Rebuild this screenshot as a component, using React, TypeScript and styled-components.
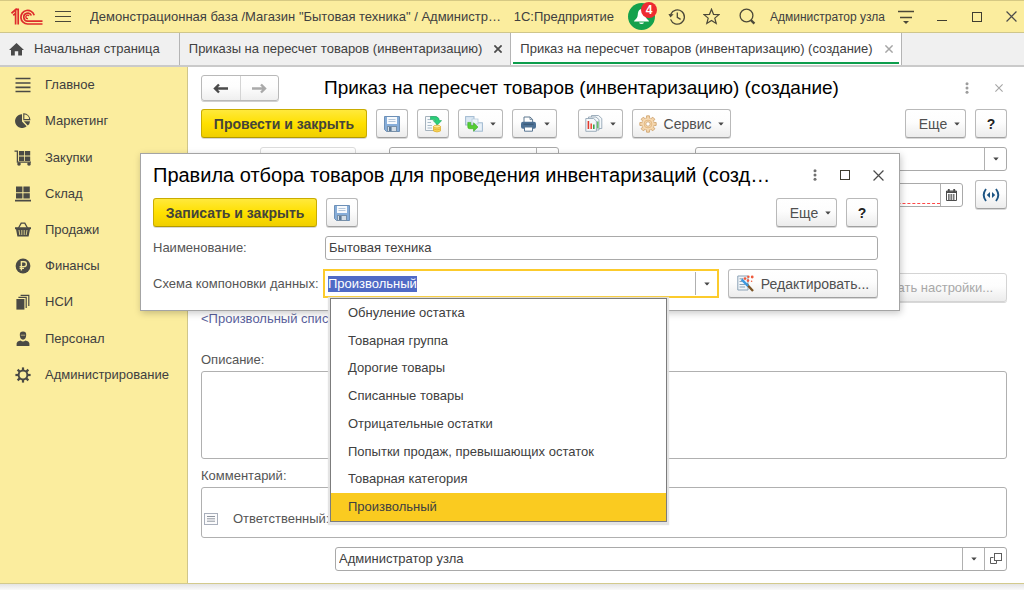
import React, { useEffect, useRef } from "react";
import styled, { createGlobalStyle, css } from "styled-components";

const GlobalStyle = createGlobalStyle`
  *, *::before, *::after { box-sizing: border-box; }
  body {
    margin: 0;
    background: #f0f0f0;
    color: #404040;
    font: 13px/16px "Liberation Sans", Arial, sans-serif;
  }
  button, input, textarea { font: inherit; color: inherit; }
  ul { margin: 0; padding: 0; list-style: none; }
  h1, h2 { margin: 0; font-weight: 400; }
  svg { display: block; flex: none; }
`;

/* ---------- window frame ---------- */

const Page = styled.div`
  min-height: 100vh;
  display: flex;
  flex-direction: column;
  padding-bottom: 6px;
  background: linear-gradient(to top, #fafafa, #e4e4e4 6px);
`;

const Frame = styled.div`
  position: relative;
  flex: 1;
  display: flex;
  flex-direction: column;
  background: #fff;
  border-top: 1px solid #d6c983;
  border-bottom: 1px solid #d3ca8c;
`;

const TopBar = styled.header`
  display: flex;
  align-items: center;
  height: 32px;
  padding: 0 7px 0 11px;
  background: #fbed9e;
  border-bottom: 1px solid #cfc68b;
`;

const AppTitle = styled.span`
  flex: 1;
  min-width: 0;
  margin-left: 19px;
  white-space: nowrap;
  overflow: hidden;
  text-overflow: ellipsis;
`;

const Product = styled.span`
  margin-right: 14px;
  white-space: nowrap;
`;

const UserName = styled.a`
  margin: 0 13px 0 14px;
  font-size: 12px;
  color: inherit;
  text-decoration: none;
  white-space: nowrap;
`;

const IconButton = styled.button<{ $gap?: number }>`
  display: flex;
  align-items: center;
  justify-content: center;
  margin: 0 0 0 ${(p) => p.$gap ?? 0}px;
  padding: 0;
  border: 0;
  background: none;
  color: inherit;
`;

const Bell = styled(IconButton)`
  position: relative;
  width: 27px;
  height: 27px;
  border-radius: 50%;
  background: #14a14d;
`;

const Badge = styled.span`
  position: absolute;
  top: -1px;
  right: -2px;
  width: 16px;
  height: 16px;
  border-radius: 50%;
  background: #ee2a30;
  color: #fff;
  font-size: 12px;
  line-height: 16px;
  font-weight: 700;
  text-align: center;
`;

const TabBar = styled.nav`
  display: flex;
  height: 34px;
  background: #f0f0f0;
  border-bottom: 2px solid #cacaca;
`;

const Tab = styled.div<{ $active?: boolean; $end?: number }>`
  display: flex;
  align-items: center;
  padding: 0 ${(p) => p.$end ?? 8}px 0 9px;
  white-space: nowrap;
  border-right: 1px solid #b4b4b4;
  ${(p) =>
    p.$active &&
    css`
      background: linear-gradient(#0d9e4d, #0d9e4d) 2px 29px / calc(100% - 4px) 2px no-repeat #fff;
    `}
`;

const TabLink = styled.a`
  display: flex;
  align-items: center;
  gap: 10px;
  color: inherit;
  text-decoration: none;
`;

const Body = styled.div`
  flex: 1;
  display: flex;
`;

/* ---------- sidebar ---------- */

const Sidebar = styled.nav`
  flex: none;
  width: 188px;
  background: #fbed9e;
  border-right: 1px solid #d0c68a;
`;

const Sections = styled.ul`
  display: flex;
  flex-direction: column;
  height: 326px;
`;

const Section = styled.li`
  flex: 1;
  display: flex;
`;

const SectionLink = styled.a`
  flex: 1;
  display: flex;
  align-items: center;
  gap: 13px;
  padding-left: 14px;
  color: inherit;
  text-decoration: none;
`;

/* ---------- shared controls ---------- */

const Spacer = styled.span`
  flex: 1;
`;

const Button = styled.button<{ $w?: number; $small?: boolean }>`
  flex: none;
  display: flex;
  align-items: center;
  justify-content: center;
  gap: 7px;
  height: 29px;
  width: ${(p) => (p.$w ? `${p.$w}px` : "auto")};
  padding: 0 6px;
  border: 1px solid #b9b9b9;
  border-bottom-color: #a0a0a0;
  border-radius: 3px;
  background: linear-gradient(#fff, #fdfdfd 45%, #ececec);
  box-shadow: 0 1px 0 #d8d8d8;
  white-space: nowrap;
  font-size: ${(p) => (p.$small ? 13 : 14)}px;
  color: #505050;
  &:disabled {
    color: #a8a8a8;
    border-color: #d4d4d4;
  }
`;

const PrimaryButton = styled(Button)`
  border-color: #c9ac00;
  border-bottom-color: #b39a00;
  background: linear-gradient(#ffe93c, #ffe000 50%, #f0cf00);
  color: #44443a;
  font-weight: 700;
`;

const MoreButton = styled(Button)`
  padding-left: 14px;
`;

const HelpButton = styled(Button)`
  color: #222;
  font-weight: 700;
`;

const Field = styled.div<{ $w?: number; $faint?: boolean; $focus?: boolean }>`
  display: flex;
  flex: ${(p) => (p.$w ? `0 0 ${p.$w}px` : "1 1 0")};
  min-width: 0;
  height: ${(p) => (p.$focus ? 29 : 24)}px;
  border: ${(p) => (p.$focus ? "2px solid #fccb2c" : `1px solid ${p.$faint ? "#dcdcdc" : "#a9a9a9"}`)};
  border-radius: ${(p) => (p.$focus ? 0 : 3)}px;
  padding: ${(p) => (p.$focus ? "1px 0" : "0")};
  background: #fff;
`;

const TextInput = styled.input<{ $required?: boolean }>`
  flex: 1;
  min-width: 0;
  margin: 0 0 ${(p) => (p.$required ? 2 : 0)}px;
  padding: 0 3px;
  border: 0 solid transparent;
  border-bottom: ${(p) => (p.$required ? "1px dashed #ff4a4a" : "0")};
  outline: 0;
  background: none;
  &::selection { background: #4f6ac6; color: #fff; }
`;

const FieldButton = styled.button`
  flex: none;
  display: flex;
  align-items: center;
  justify-content: center;
  width: 22px;
  padding: 0;
  border: 0;
  border-left: 1px solid #b0b0b0;
  background: none;
`;

/* ---------- document form ---------- */

const Form = styled.main`
  flex: 1;
  min-width: 0;
  padding: 8px 17px 12px 13px;
  display: flex;
  flex-direction: column;
`;

const Row = styled.div<{ $top?: number; $gap?: number }>`
  display: flex;
  align-items: center;
  gap: ${(p) => p.$gap ?? 9}px;
  margin-top: ${(p) => p.$top ?? 0}px;
`;

const History = styled.div`
  display: flex;
  width: 78px;
  height: 26px;
  border: 1px solid #b9b9b9;
  border-radius: 3px;
  box-shadow: 0 1px 0 #d0d0d0;
  background: linear-gradient(#fff, #fdfdfd 45%, #efefef);
`;

const HistoryButton = styled.button`
  flex: 1;
  display: flex;
  align-items: center;
  justify-content: center;
  padding: 0;
  border: 0;
  background: none;
  & + & { border-left: 1px solid #d4d4d4; }
`;

const Heading = styled.h1`
  margin-left: 36px;
  font-size: 19px;
  line-height: 24px;
  color: #000;
  white-space: nowrap;
`;

const Gap = styled.span<{ $w: number }>`
  flex: 0 0 ${(p) => p.$w}px;
`;

const FilterLink = styled.a`
  align-self: flex-start;
  margin-top: 9px;
  color: #5a5f9c;
  text-decoration: none;
`;

const Caption = styled.label<{ $top: number }>`
  margin-top: ${(p) => p.$top}px;
  margin-bottom: 3px;
  color: #555;
`;

const Memo = styled.textarea`
  display: block;
  width: 100%;
  height: 88px;
  border: 1px solid #b0b0b0;
  border-radius: 3px;
  resize: none;
`;

const CommentBox = styled.div`
  border: 1px solid #b0b0b0;
  border-radius: 3px;
  padding-bottom: 10px;
`;

const CommentInput = styled.textarea`
  display: block;
  width: 100%;
  height: 23px;
  border: 0;
  padding: 2px 3px;
  background: none;
  resize: none;
`;

const Responsible = styled.div`
  display: flex;
  align-items: center;
  gap: 15px;
  padding-left: 2px;
  color: #555;
`;

const ResponsibleRow = styled(Row)`
  padding-left: 134px;
`;

/* ---------- dialog ---------- */

const Dialog = styled.section`
  position: absolute;
  top: 152px;
  left: 140px;
  right: 124px;
  padding: 9px 21px 12px 12px;
  border: 1px solid #a4a4a4;
  background: #fff;
  box-shadow: 1px 2px 7px rgba(0, 0, 0, 0.22);
`;

const DialogTitle = styled.h2`
  flex: 1;
  font-size: 20px;
  line-height: 24px;
  color: #000;
  white-space: nowrap;
`;

const WindowControls = styled.div<{ $gap: number; $end: number }>`
  display: flex;
  align-items: center;
  gap: ${(p) => p.$gap}px;
  margin-right: ${(p) => p.$end}px;
`;

const FormRow = styled.div<{ $top: number }>`
  display: flex;
  align-items: center;
  margin-top: ${(p) => p.$top}px;
`;

const DialogLabel = styled.label<{ $w: number }>`
  flex: 0 0 ${(p) => p.$w}px;
  color: #555;
  white-space: nowrap;
`;

const Combo = styled.div`
  position: relative;
  flex: 1;
  display: flex;
  margin-right: 9px;
`;

const Options = styled.ul`
  position: absolute;
  top: 29px;
  left: 7px;
  right: 52px;
  display: flex;
  flex-direction: column;
  height: 224px;
  border: 1px solid #7c7c7c;
  background: #fff;
  box-shadow: 0 1px 1px 2px rgba(225, 225, 225, 0.9);
`;

const Option = styled.li`
  flex: 1;
  display: flex;
  align-items: center;
  padding-left: 17px;
  white-space: nowrap;
  &[aria-selected="true"] { background: #facb20; }
`;

/* ---------- icons ---------- */

const Logo = () => (
  <svg width="32" height="18" viewBox="0 0 32 18" fill="none" stroke="#de2b2b" strokeWidth="1.7">
    <path d="M0.5 5.3 L4.6 1.6 V16.5 M2.2 7.2 L4.6 5.4 M4.4 1.4 H7.2 V16.5" />
    <path d="M23.2 7.2 A6.8 6.8 0 1 0 16.6 16 H31.5" />
    <path d="M20.4 7.5 A4 4 0 1 0 16.6 13.2 H31.5" />
    <path d="M18 8 A1.7 1.7 0 1 0 17 10.5" strokeWidth="1.3" />
  </svg>
);

const Burger = () => (
  <svg width="16" height="13" viewBox="0 0 16 13" stroke="#4b4838" strokeWidth="1.2">
    <path d="M0 1.5H16M0 6.5H16M0 11.5H16" />
  </svg>
);

const BellGlyph = () => (
  <svg width="19" height="19" viewBox="0 0 19 19" fill="#fff">
    <path d="M9.5 2 C6.6 2.4 6 5 5.8 7.5 C5.6 10.5 4.4 12 2.4 13.4 L2 14.6 H17 L16.6 13.4 C14.6 12 13.4 10.5 13.2 7.5 C13 5 12.4 2.4 9.5 2Z" />
    <path d="M7 15.5 H12 A2.6 2.2 0 0 1 7 15.5Z" />
  </svg>
);

const HistoryIcon = () => (
  <svg width="18" height="18" viewBox="0 0 18 18" fill="none" stroke="#4b4838" strokeWidth="1.3">
    <path d="M2.8 6.2 A7.1 7.1 0 1 1 2.6 11.4" />
    <path d="M9.3 4.6 V9.4 L12.6 11.4" />
    <path d="M0.4 6 L5.6 6.2 L2.4 9.6Z" fill="#4b4838" stroke="none" />
  </svg>
);

const StarIcon = () => (
  <svg width="17" height="17" viewBox="0 0 17 17" fill="none" stroke="#4b4838" strokeWidth="1.2">
    <path d="M8.5 1.2 L10.5 6.3 L16 6.6 L11.8 10.1 L13.2 15.5 L8.5 12.5 L3.8 15.5 L5.2 10.1 L1 6.6 L6.5 6.3Z" />
  </svg>
);

const SearchIcon = () => (
  <svg width="17" height="17" viewBox="0 0 17 17" fill="none" stroke="#4b4838">
    <circle cx="7.5" cy="7.5" r="6.4" strokeWidth="1.3" />
    <path d="M11.8 12 L15.4 15.6" strokeWidth="2.4" />
  </svg>
);

const MenuIcon = () => (
  <svg width="16" height="16" viewBox="0 0 16 16" stroke="#4b4838" strokeWidth="1.3">
    <path d="M0 2.5H16M2 8.5H14" />
    <path d="M5 12 H11 L8 15Z" fill="#4b4838" stroke="none" />
  </svg>
);

const MinimizeIcon = () => (
  <svg width="10" height="10" viewBox="0 0 10 10" stroke="#3f3d30">
    <path d="M0 8.5H10" />
  </svg>
);

const MaximizeIcon = () => (
  <svg width="10" height="10" viewBox="0 0 10 10" fill="none" stroke="#3f3d30">
    <rect x="0.5" y="0.5" width="9" height="9" />
  </svg>
);

const CrossIcon = ({ size = 11, color = "#4b4b4b", weight = 1.1 }) => (
  <svg width={size} height={size} viewBox="0 0 10 10" stroke={color} strokeWidth={weight}>
    <path d="M0.5 0.5 L9.5 9.5 M9.5 0.5 L0.5 9.5" />
  </svg>
);

const DotsIcon = ({ color = "#707070" }) => (
  <svg width="4" height="12" viewBox="0 0 4 12" fill={color}>
    <circle cx="2" cy="1.7" r="1.5" />
    <circle cx="2" cy="6" r="1.5" />
    <circle cx="2" cy="10.3" r="1.5" />
  </svg>
);

const Caret = () => (
  <svg width="6" height="4" viewBox="0 0 6 4" fill="#4a4a4a">
    <path d="M0.3 0.5 H5.7 L3.4 3.3 H2.6Z" />
  </svg>
);

const HomeIcon = () => (
  <svg width="15" height="13" viewBox="0 0 15 13" fill="#4a4a4a">
    <path d="M7.5 0 L15 7 H13 V12.6 H9.2 V8.2 H5.8 V12.6 H2 V7 H0Z" />
  </svg>
);

const ArrowIcon = ({ back = false }) => (
  <svg width="15" height="11" viewBox="0 0 15 11" fill="none" stroke={back ? "#4a4a4a" : "#a9a9a9"} strokeWidth="2.4">
    {back ? <path d="M15 5.5 H2 M6 1.5 L2 5.5 L6 9.5" /> : <path d="M0 5.5 H13 M9 1.5 L13 5.5 L9 9.5" />}
  </svg>
);

const SaveIcon = () => (
  <svg width="16" height="16" viewBox="0 0 16 16">
    <path d="M0.5 0.5 H15.5 V15.5 H2.5 L0.5 13.5Z" fill="#86add9" stroke="#6c8fb6" />
    <rect x="3" y="1" width="10" height="7" fill="#f7fafd" />
    <path d="M4.5 3.5H11.5M4.5 5.5H11.5" stroke="#b4c6da" />
    <rect x="3.5" y="10.5" width="9" height="5" fill="#d3dde6" stroke="#7890a8" />
    <rect x="5" y="11" width="2.6" height="4" fill="#5b7896" />
  </svg>
);

const PostIcon = () => (
  <svg width="18" height="18" viewBox="0 0 18 18">
    <path d="M1.5 1.5 H12.5 V15.5 H1.5Z" fill="#f6f9fb" stroke="#a5b2bd" />
    <path d="M3.5 4.5H7M3.5 7.5H7M3.5 10.5H8M3.5 13H8" stroke="#a9bac8" />
    <path d="M6.5 1.6 H10.5 Q15.4 1.8 15.2 5.6 H17.6 L13.4 10 L9.2 5.6 H11.7 Q11.6 4.4 10 4.4 H6.5Z" fill="#2bd07a" stroke="#1aa45a" strokeWidth="0.6" />
    <path d="M9.5 11.5 V16 Q13 18 16.5 16 V11.5Z" fill="#f8d65a" stroke="#dba928" strokeWidth="0.7" />
    <ellipse cx="13" cy="11.6" rx="3.5" ry="1.4" fill="#ffe895" stroke="#dba928" strokeWidth="0.7" />
    <path d="M9.5 14 Q13 15.8 16.5 14" stroke="#dba928" fill="none" strokeWidth="0.7" />
  </svg>
);

const BasedOnIcon = () => (
  <svg width="18" height="16" viewBox="0 0 18 16">
    <rect x="0.6" y="0.6" width="8.4" height="8.4" fill="#dbe8f3" stroke="#9fb9d0" />
    <rect x="9" y="6.8" width="8.4" height="8.4" fill="#e8f1f8" stroke="#9fb9d0" />
    <rect x="7" y="3" width="6" height="5" fill="#eef5fa" stroke="#b7cadb" strokeWidth="0.8" />
    <path d="M2.8 6.4 H5.8 V9.6 H8.6 V6.8 L13 11.1 L8.6 15.2 V12.7 H4.4 Q2.8 12.7 2.8 11Z" fill="#54cf35" stroke="#3caa22" strokeWidth="0.6" />
  </svg>
);

const PrintIcon = () => (
  <svg width="17" height="16" viewBox="0 0 17 16">
    <path d="M4 6 V1 H10 L12.6 3.4 V6" fill="#fff" stroke="#5f7890" />
    <path d="M10 1 V3.6 H12.6" fill="none" stroke="#5f7890" strokeWidth="0.8" />
    <rect x="1" y="5.8" width="15" height="7" rx="2" fill="#4d7195" />
    <path d="M3.5 8.2H13.5" stroke="#35536f" />
    <path d="M4.5 11 H12.5 V15.2 H4.5Z" fill="#fff" stroke="#5a7894" />
  </svg>
);

const ReportIcon = () => (
  <svg width="18" height="17" viewBox="0 0 18 17" fill="#f4f8fa" stroke="#94a6b5" strokeWidth="0.9">
    <path d="M6.5 0.5 H13.5 L16.8 3.5 V13.5 H6.5Z" />
    <path d="M3.5 2 H11 L14 4.6 V15 H3.5Z" />
    <path d="M0.8 3.5 H8.6 L11.4 6 V16.3 H0.8Z" />
    <path d="M3.4 6 V14" stroke="#e23a2e" strokeWidth="1.6" />
    <path d="M6.2 8.5 V14" stroke="#ef4f3a" strokeWidth="1.6" />
    <path d="M8.8 9.5 V14" stroke="#3aa24a" strokeWidth="1.6" />
    <path d="M12.8 6.5 V13.5" stroke="#4fb64e" strokeWidth="1.3" />
  </svg>
);

const spokes = [0, 45, 90, 135, 180, 225, 270, 315];

const ServiceIcon = () => (
  <svg width="18" height="18" viewBox="0 0 18 18">
    <g fill="#f3d3a8" stroke="#cc9f6a" strokeWidth="0.8">
      {spokes.map((a) => (
        <path key={a} d="M7 5 L7.6 0.8 H10.4 L11 5Z" transform={`rotate(${a} 9 9)`} />
      ))}
    </g>
    <circle cx="9" cy="9" r="5.7" fill="#f6dbb6" />
    <circle cx="9" cy="9" r="3.9" fill="none" stroke="#e2b47a" strokeWidth="0.9" />
    <circle cx="9" cy="9" r="2.2" fill="#fff" stroke="#cc9f6a" strokeWidth="0.8" />
  </svg>
);

const CalendarIcon = () => (
  <svg width="11" height="12" viewBox="0 0 11 12">
    <path d="M0.5 2 H10.5 V11.5 H0.5Z" fill="#fff" stroke="#4c4c4c" />
    <path d="M0.5 3.2 H10.5 M2.8 0 V3 M8.2 0 V3" stroke="#4c4c4c" strokeWidth="1.8" />
    <path d="M2 6 H9 M2 8 H9 M2 10 H9" stroke="#4c4c4c" strokeWidth="1.4" strokeDasharray="1.7 0.7" />
  </svg>
);

const LinkIcon = () => (
  <svg width="18" height="14" viewBox="0 0 18 14" fill="none" stroke="#1d5483" strokeWidth="1.9">
    <path d="M4 1 Q-0.6 7 4 13 M14 1 Q18.6 7 14 13" />
    <path d="M8 4 V10 L4.8 7Z M10 4 V10 L13.2 7Z" fill="#1d5483" stroke="none" />
  </svg>
);

const OpenIcon = () => (
  <svg width="12" height="12" viewBox="0 0 12 12" fill="#fff" stroke="#5c5c5c">
    <path d="M3.5 4.5 H0.5 V10.5 H6.5 V8" />
    <rect x="4.5" y="0.5" width="7" height="7" />
  </svg>
);

const NoteIcon = () => (
  <svg width="14" height="12" viewBox="0 0 14 12" fill="#fbfbfc" stroke="#a9afbb">
    <rect x="0.5" y="0.5" width="13" height="11" />
    <path d="M3 3.5H11M3 5.8H11M3 8.2H11" stroke="#8f959f" />
  </svg>
);

const EditIcon = () => (
  <svg width="17" height="17" viewBox="0 0 17 17">
    <path d="M0.8 1 H11 V15 H0.8Z" fill="#f0f5f9" stroke="#8ba2b5" />
    <path d="M2.5 3.8H6M2.5 6.5H5M2.5 9.5H8M2.5 12H8" stroke="#8ba2b5" />
    <path d="M9.5 9 L16 16" stroke="#7b5526" strokeWidth="2.4" />
    <path d="M4.6 4.4 L11 11" stroke="#3a98e0" strokeWidth="2.4" />
    <g fill="#ee5a3c">
      <circle cx="8" cy="3.6" r="1.4" />
      <circle cx="11.4" cy="1.8" r="1.2" />
      <circle cx="11" cy="5.6" r="1.3" />
      <circle cx="15.2" cy="2" r="1.4" />
      <circle cx="14.6" cy="6.2" r="0.8" />
    </g>
  </svg>
);

const INK = "#4a4a45";

const sectionIcons: Record<string, React.ReactNode> = {
  main: <path d="M1.5 2.5H16.5M1.5 7H16.5M1.5 11.3H16.5M1.5 15.5H16.5" stroke={INK} strokeWidth="1.7" />,
  marketing: (
    <g fill={INK}>
      <path d="M8 2.2 A6.9 6.9 0 1 0 12.6 14.2 L8 9.4Z" />
      <path d="M9.8 1.8 A6.3 6.3 0 0 1 15.8 7.6 H9.8Z" fill="none" stroke={INK} strokeWidth="1.1" />
      <path d="M9.8 9.2 H16 Q15.8 12 13.8 13.6Z" />
    </g>
  ),
  purchases: (
    <g fill={INK}>
      <path d="M0.5 2.2 H3.4 V13.2 H17" fill="none" stroke={INK} strokeWidth="1.3" />
      <path d="M5 2h5.2v4.6H5zM11 2h5.2v4.6H11zM5 7.4h5.2v4.6H5zM11 7.4h5.2v4.6H11z" />
      <circle cx="5" cy="15" r="1.8" />
      <circle cx="15" cy="15" r="1.8" />
    </g>
  ),
  warehouse: <path d="M2 1.6h6.4v5.6H2zM9.4 1.6h6.4v5.6H9.4zM2 8.2h6.4v5.4H2zM9.4 8.2h6.4v5.4H9.4zM1 14.8h16v1.8H1z" fill={INK} />,
  sales: (
    <g fill={INK}>
      <path d="M4.5 7 L7.2 2.2 H10.8 L13.5 7" fill="none" stroke={INK} strokeWidth="1.3" />
      <path d="M1 6.2 H17 V8.2 H16 L14.6 15.6 H3.4 L2 8.2 H1Z" />
      <path d="M5 9 L5.8 14 M7.8 9 V14 M10.2 9 V14 M13 9 L12.2 14" stroke="#e5d891" strokeWidth="0.9" />
    </g>
  ),
  finance: (
    <g>
      <circle cx="9" cy="9" r="7.4" fill={INK} />
      <path d="M7.4 13.4 V4.8 H10 A2.4 2.4 0 0 1 10 9.6 H5.6 M5.6 11.4 H10" fill="none" stroke="#f3e699" strokeWidth="1.4" />
    </g>
  ),
  reference: (
    <g fill={INK}>
      <path d="M2.4 6h8v10.6h-8z" />
      <path d="M4.4 4.4 H12.2 V15 M6.6 2.4 H14.8 V13" fill="none" stroke={INK} strokeWidth="1.2" />
    </g>
  ),
  staff: (
    <g fill={INK}>
      <path d="M5.8 5 Q5.6 1.6 9 1.6 Q12.4 1.6 12.2 5 Q12 9.4 9 9.8 Q6 9.4 5.8 5Z" />
      <path d="M6.8 5.2 H11.2" stroke="#cfc384" strokeWidth="0.8" />
      <path d="M2.6 16 V13.4 Q3 11 6.6 10.4 Q9 12.4 11.4 10.4 Q15 11 15.4 13.4 V16Z" />
    </g>
  ),
  admin: (
    <g>
      <circle cx="9" cy="9" r="4.4" fill="none" stroke={INK} strokeWidth="2" />
      {spokes.map((a) => (
        <path key={a} d="M9 1.4 V4.6" stroke={INK} strokeWidth="2.2" transform={`rotate(${a} 9 9)`} />
      ))}
    </g>
  ),
};

const sections = [
  ["main", "Главное"],
  ["marketing", "Маркетинг"],
  ["purchases", "Закупки"],
  ["warehouse", "Склад"],
  ["sales", "Продажи"],
  ["finance", "Финансы"],
  ["reference", "НСИ"],
  ["staff", "Персонал"],
  ["admin", "Администрирование"],
];

const schemes = [
  "Обнуление остатка",
  "Товарная группа",
  "Дорогие товары",
  "Списанные товары",
  "Отрицательные остатки",
  "Попытки продаж, превышающих остаток",
  "Товарная категория",
  "Произвольный",
];

/* ---------- parts ---------- */

const More = () => (
  <MoreButton type="button" $w={61}>
    Еще <Caret />
  </MoreButton>
);

const Help = () => (
  <HelpButton type="button" $w={32}>?</HelpButton>
);

function Header() {
  return (
    <TopBar>
      <Logo />
      <IconButton type="button" aria-label="Меню" $gap={12}><Burger /></IconButton>
      <AppTitle>Демонстрационная база /Магазин "Бытовая техника" / Администр…</AppTitle>
      <Product>1С:Предприятие</Product>
      <Bell type="button" aria-label="Уведомления">
        <BellGlyph />
        <Badge>4</Badge>
      </Bell>
      <IconButton type="button" aria-label="История" $gap={13}><HistoryIcon /></IconButton>
      <IconButton type="button" aria-label="Избранное" $gap={17}><StarIcon /></IconButton>
      <IconButton type="button" aria-label="Поиск" $gap={19}><SearchIcon /></IconButton>
      <UserName href="#user">Администратор узла</UserName>
      <IconButton type="button" aria-label="Сервис и настройки"><MenuIcon /></IconButton>
      <IconButton type="button" aria-label="Свернуть" $gap={23}><MinimizeIcon /></IconButton>
      <IconButton type="button" aria-label="Развернуть" $gap={25}><MaximizeIcon /></IconButton>
      <IconButton type="button" aria-label="Закрыть" $gap={24}><CrossIcon /></IconButton>
    </TopBar>
  );
}

function Tabs() {
  return (
    <TabBar>
      <Tab $end={19}>
        <TabLink href="#home"><HomeIcon />Начальная страница</TabLink>
      </Tab>
      <Tab>
        <TabLink href="#orders">Приказы на пересчет товаров (инвентаризацию)</TabLink>
        <IconButton type="button" aria-label="Закрыть вкладку" $gap={12}><CrossIcon size={8} weight={2.2} /></IconButton>
      </Tab>
      <Tab $active>
        <TabLink href="#order">Приказ на пересчет товаров (инвентаризацию) (создание)</TabLink>
        <IconButton type="button" aria-label="Закрыть вкладку" $gap={12}><CrossIcon size={8} weight={1.8} color="#a6a6a6" /></IconButton>
      </Tab>
    </TabBar>
  );
}

function OrderForm() {
  return (
    <Form>
      <Row>
        <History>
          <HistoryButton type="button" aria-label="Назад"><ArrowIcon back /></HistoryButton>
          <HistoryButton type="button" aria-label="Вперед"><ArrowIcon /></HistoryButton>
        </History>
        <Heading>Приказ на пересчет товаров (инвентаризацию) (создание)</Heading>
        <Spacer />
        <WindowControls $gap={26} $end={4}>
          <IconButton type="button" aria-label="Действия"><DotsIcon color="#9c9c9c" /></IconButton>
          <IconButton type="button" aria-label="Закрыть форму"><CrossIcon size={8} color="#a6a6a6" weight={1.4} /></IconButton>
        </WindowControls>
      </Row>

      <Row $top={8}>
        <PrimaryButton type="button" $w={166}>Провести и закрыть</PrimaryButton>
        <Button type="button" $w={32} aria-label="Записать"><SaveIcon /></Button>
        <Button type="button" $w={32} aria-label="Провести"><PostIcon /></Button>
        <Button type="button" $w={45} aria-label="Создать на основании"><BasedOnIcon /><Caret /></Button>
        <Button type="button" $w={45} aria-label="Печать"><PrintIcon /><Caret /></Button>
        <Gap $w={3} />
        <Button type="button" $w={45} aria-label="Отчеты"><ReportIcon /><Caret /></Button>
        <Button type="button" $w={99}><ServiceIcon />Сервис<Caret /></Button>
        <Spacer />
        <More />
        <Help />
      </Row>

      <Row $top={9}>
        <Gap $w={50} />
        <Field $w={96} $faint><TextInput aria-label="Номер" disabled /></Field>
        <Gap $w={15} />
        <Field $w={170}>
          <TextInput aria-label="Дата" />
          <FieldButton type="button" aria-label="Выбрать дату"><CalendarIcon /></FieldButton>
        </Field>
        <Gap $w={118} />
        <Field>
          <TextInput aria-label="Организация" />
          <FieldButton type="button" aria-label="Выбрать организацию"><Caret /></FieldButton>
        </Field>
      </Row>

      <Row $top={9} $gap={12}>
        <Spacer />
        <Field $w={170}>
          <TextInput aria-label="Срок" $required />
          <FieldButton type="button" aria-label="Выбрать срок"><CalendarIcon /></FieldButton>
        </Field>
        <Button type="button" $w={32} aria-label="Период"><LinkIcon /></Button>
      </Row>

      <Row $top={64}>
        <Spacer />
        <Button type="button" $w={146} $small disabled>Задать настройки...</Button>
      </Row>

      <FilterLink href="#filter">&lt;Произвольный список&gt;</FilterLink>

      <Caption $top={25} htmlFor="description">Описание:</Caption>
      <Memo id="description" />
      <Caption $top={9} htmlFor="comment">Комментарий:</Caption>
      <CommentBox>
        <CommentInput id="comment" />
        <Responsible>
          <NoteIcon />
          <label htmlFor="responsible">Ответственный:</label>
        </Responsible>
      </CommentBox>

      <ResponsibleRow $top={9}>
        <Field>
          <TextInput id="responsible" defaultValue="Администратор узла" />
          <FieldButton type="button" aria-label="Выбрать"><Caret /></FieldButton>
          <FieldButton type="button" aria-label="Открыть"><OpenIcon /></FieldButton>
        </Field>
      </ResponsibleRow>
    </Form>
  );
}

function RulesDialog() {
  const scheme = useRef<HTMLInputElement>(null);
  useEffect(() => {
    scheme.current?.focus();
    scheme.current?.select();
  }, []);

  return (
    <Dialog role="dialog" aria-labelledby="rules-title">
      <Row>
        <DialogTitle id="rules-title">Правила отбора товаров для проведения инвентаризаций (созд…</DialogTitle>
        <WindowControls $gap={23} $end={-6}>
          <IconButton type="button" aria-label="Действия"><DotsIcon /></IconButton>
          <IconButton type="button" aria-label="Развернуть"><MaximizeIcon /></IconButton>
          <IconButton type="button" aria-label="Закрыть"><CrossIcon /></IconButton>
        </WindowControls>
      </Row>
      <Row $top={11}>
        <PrimaryButton type="button" $w={164}>Записать и закрыть</PrimaryButton>
        <Button type="button" $w={32} aria-label="Записать"><SaveIcon /></Button>
        <Spacer />
        <More />
        <Help />
      </Row>
      <FormRow $top={9}>
        <DialogLabel $w={172} htmlFor="rule-name">Наименование:</DialogLabel>
        <Field><TextInput id="rule-name" defaultValue="Бытовая техника" /></Field>
      </FormRow>
      <FormRow $top={9}>
        <DialogLabel $w={170} htmlFor="rule-scheme">Схема компоновки данных:</DialogLabel>
        <Combo>
          <Field $focus>
            <TextInput
              id="rule-scheme"
              ref={scheme}
              role="combobox"
              aria-expanded="true"
              aria-controls="scheme-list"
              defaultValue="Произвольный"
            />
            <FieldButton type="button" aria-label="Показать список"><Caret /></FieldButton>
          </Field>
          <Options id="scheme-list" role="listbox" aria-label="Схема компоновки данных">
            {schemes.map((s) => (
              <Option key={s} role="option" aria-selected={s === "Произвольный"}>{s}</Option>
            ))}
          </Options>
        </Combo>
        <Button type="button" $w={150}><EditIcon />Редактировать...</Button>
      </FormRow>
    </Dialog>
  );
}

export default function App() {
  return (
    <>
      <GlobalStyle />
      <Page>
        <Frame>
          <Header />
          <Tabs />
          <Body>
            <Sidebar>
              <Sections>
                {sections.map(([key, label]) => (
                  <Section key={key}>
                    <SectionLink href={`#${key}`}>
                      <svg width="18" height="18" viewBox="0 0 18 18">{sectionIcons[key]}</svg>
                      {label}
                    </SectionLink>
                  </Section>
                ))}
              </Sections>
            </Sidebar>
            <OrderForm />
          </Body>
          <RulesDialog />
        </Frame>
      </Page>
    </>
  );
}
